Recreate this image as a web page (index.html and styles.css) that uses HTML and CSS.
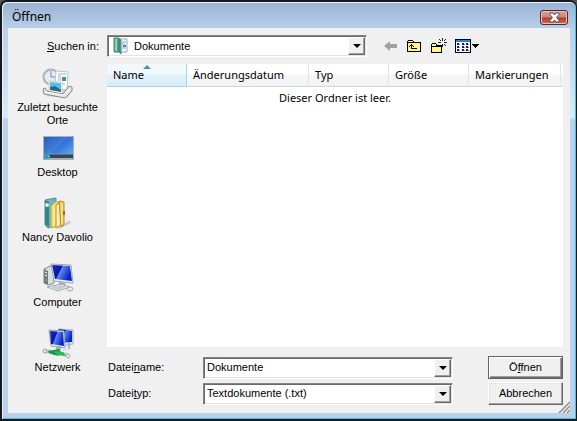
FILE: index.html
```html
<!DOCTYPE html>
<html lang="de">
<head>
<meta charset="utf-8">
<title>Öffnen</title>
<link rel="stylesheet" href="styles.css">
</head>
<body>
<main class="window">
  <header class="titlebar">
    <h1>Öffnen</h1>
    <button class="close" aria-label="Schließen">
      <svg width="13" height="11" viewBox="0 0 13 11"><path d="M2 1h3l1.500 2L8 1h3v1.500L8.500 5.500 11 8.500V10H8L6.500 8 5 10H2V8.500l2.500-3L2 2.500z" fill="#fff" stroke="#53566b"/></svg>
    </button>
  </header>
  <form class="client">
    <div class="toolbar">
      <label for="folder"><u>S</u>uchen in:</label>
      <div class="combo folder">
        <svg class="combo-icon" width="16" height="18" viewBox="0 0 16 18"><path d="M6 2h8v13H6z" fill="#f5f8fb" stroke="#9aabb8"/><path d="M9 5h4M9 7h3M9 11h4" stroke="#9aa9bb"/><path d="M10 8h3v2h-3z" fill="#3685dc"/><path d="M1 1h5l2 2v14l-2-2H1z" fill="#5aa790" stroke="#438775"/><path d="M2 2h2v12H2z" fill="#9acdbd"/><path d="M6 2v13" stroke="#2e6e68"/></svg>
        <select id="folder"><option>Dokumente</option></select>
        <span class="arrow"></span>
      </div>
      <div class="tools">
        <button type="button" aria-label="Zurück"><svg width="14" height="12" viewBox="0 0 14 12"><path d="M0 6l6-5v3h7v4H6v3z" fill="#a0a0a0"/></svg></button>
        <button type="button" aria-label="Übergeordneter Ordner"><svg width="16" height="14" viewBox="0 0 16 14" shape-rendering="crispEdges"><path d="M1 2h1V1h5v1h1v1h7v10H1z" fill="#000"/><path d="M2 2h5v1H2zM2 4h12v8H2z" fill="#fff685"/><path d="M5 5h1v1h1v1H6v2h5v1H5V7H4V6h1zM7 7h1v1H7zM3 7h1v1H3z" fill="#000"/></svg></button>
        <button type="button" aria-label="Neuer Ordner"><svg width="17" height="16" viewBox="0 0 17 16" shape-rendering="crispEdges"><path d="M1 6h1V5h4v1h1v1h5v8H1z" fill="#000"/><path d="M2 6h4v1H2zM2 9h9v5H2zM2 7h4v1H2z" fill="#fff685"/><path d="M12 0h1v3h-1zM12 6h1v3h-1zM8 4h3v1H8zM14 4h3v1h-3zM9 1h1v1H9zM10 2h1v1h-1zM15 1h1v1h-1zM14 2h1v1h-1zM14 6h1v1h-1zM15 7h1v1h-1z" fill="#222"/></svg></button>
        <button type="button" aria-label="Ansicht"><svg width="24" height="14" viewBox="0 0 24 14" shape-rendering="crispEdges"><path d="M0 0h16v14H0z"/><path d="M1 3h14v10H1z" fill="#fff"/><path d="M1 1h14v2H1z" fill="#1d83e8"/><path d="M2 4h2v2H2zM7 4h2v2H7zM11 4h2v2h-2zM2 7h2v2H2zM7 7h2v2H7zM11 7h2v2h-2zM2 10h2v2H2zM7 10h2v2H7zM11 10h2v2h-2z" fill="#161673"/><path d="M4 5h1v1H4zM9 5h1v1H9zM13 5h1v1h-1zM4 8h1v1H4zM9 8h1v1H9zM13 8h1v1h-1zM4 11h1v1H4zM9 11h1v1H9zM13 11h1v1h-1z" fill="#889"/><path d="M17 5h7v1h-1v1h-1v1h-1v1h-1V8h-1V7h-1V6h-1z"/></svg></button>
      </div>
    </div>

    <nav class="places">
      <a href="#zuletzt">
        <svg width="32" height="32" viewBox="0 0 32 32"><path d="M4 29l22 2 5-9-6-3z" fill="#d1d1d1"/><circle cx="9" cy="10" r="7.500" fill="#e5edf2" stroke="#a5b3bd" stroke-width="2"/><path d="M9 4v6h4" fill="none" stroke="#758593"/><path d="M14 4l12 1-1 18-12-2z" fill="#fff" stroke="#bec3c8"/><path d="M16 7h8M16 9h3M16 11h3M16 13h3M16 17h7" stroke="#a8aeb5"/><path d="M20 10h4v4h-4z" fill="#349a9b"/><path d="M7 14l13 1v12L7 25z" fill="#fff" stroke="#ccd2d6"/><path d="M8 15l11 1v8L8 23z" fill="#5fb9ea"/><path d="M8 20l5-1 6 4v2L8 23z" fill="#286e80"/><path d="M1 22l2-1 2 3 16 3 6-8 3 1v4l-7 7L2 27z" fill="#e5e5e2" stroke="#8c8d88"/><path d="M3 25l18 3 7-6" fill="none" stroke="#fff"/></svg>
        <span>Zuletzt besuchte Orte</span>
      </a>
      <a href="#desktop">
        <svg width="32" height="32" viewBox="0 0 32 32"><defs><linearGradient id="sky" x2="1" y2="1"><stop stop-color="#173fb0"/><stop offset=".55" stop-color="#367bdf"/><stop offset="1" stop-color="#71b3ef"/></linearGradient></defs><path d="M1 4h31v24H1z" fill="#a2afbd"/><path d="M2 5h29v21H2z" fill="url(#sky)"/><path d="M2 5h24L9 22H2z" fill="#71a9ee" opacity=".25"/><path d="M2 22h29v4H2z" fill="#334657"/><path d="M2 22h29" stroke="#8298ab"/><circle cx="5" cy="24" r="3" fill="#259bc4"/><path d="M4 23h1v1H4z" fill="#ef6c2d"/><path d="M6 24h1v1H6z" fill="#d8e845"/></svg>
        <span>Desktop</span>
      </a>
      <a href="#nancy">
        <svg width="32" height="32" viewBox="0 0 32 32"><path d="M14 31l14-8 1 3-12 6z" fill="#cdcdcd"/><path d="M3 3l11-2v27l-8 3-3-3z" fill="#6eb7b7" stroke="#489297"/><path d="M3 3l4 2v25l-4-3z" fill="#348588"/><circle cx="5" cy="8" r="2" fill="#dfeef0"/><path d="M9 9l4-4h6v23l-10 3z" fill="#f0d975" stroke="#c6a642"/><path d="M14 8l5-3v23l-5 3z" fill="#f8e89f" stroke="#ba9737"/><path d="M17 4l5 1v23l-3 2z" fill="#ecc957" stroke="#b28e2e"/><path d="M12 9v20M16 8v20M20 6v21" stroke="#fff5ba"/><path d="M21 14h2v4h-2z" fill="#be5248"/></svg>
        <span>Nancy Davolio</span>
      </a>
      <a href="#computer">
        <svg width="32" height="32" viewBox="0 0 32 32"><defs><linearGradient id="screen" x2="1" y2=".4"><stop stop-color="#1534b8"/><stop offset=".45" stop-color="#0612ae"/><stop offset=".5" stop-color="#5a86f4"/><stop offset="1" stop-color="#0923be"/></linearGradient></defs><path d="M2 7l6-3 4 2v15l-5 2-5-2z" fill="#d8dddd" stroke="#858d8d"/><path d="M2 7l4 2v14l-4-2z" fill="#737b7b"/><path d="M3 10l2 1M3 13l2 1" stroke="#fff"/><circle cx="4" cy="18" r="1" fill="#41cb67"/><path d="M9 2l20 1 2 18-19-2z" fill="#f0f3f6" stroke="#9ca6b3"/><path d="M10 3l18 1 2 15-17-2z" fill="url(#screen)"/><path d="M17 20l6 1 1 5h-7z" fill="#9ba6b0"/><path d="M5 25l14-3 9 3-12 4z" fill="#f0f1f2" stroke="#a7adb2"/><path d="M8 25l11-2 6 2-9 3z" fill="#c7cccf"/><ellipse cx="28" cy="27" rx="3" ry="2" fill="#eee" stroke="#aaa"/></svg>
        <span>Computer</span>
      </a>
      <a href="#netzwerk">
        <svg width="32" height="32" viewBox="0 0 32 32"><path d="M16 2l15 1v14l-12 2z" fill="#dfe6f2" stroke="#9facba"/><path d="M17 2l13 2v11l-11 1z" fill="url(#screen)"/><path d="M7 3l15 1 1 17-14-2z" fill="#e6ebf2" stroke="#94a2b3"/><path d="M8 4l13 1 1 14-13-2z" fill="url(#screen)"/><path d="M14 19h5v4h-5zM26 16h2v6h-2z" fill="#a5b0b8"/><path d="M20 22l10-1v1l-9 2z" fill="#dce0e3"/><path d="M3 24l6 1M20 27l6 1" stroke="#bccac3" stroke-width="4"/><path d="M6 24l11-2 2 3h-6l5 4-6-1-5-2z" fill="#139c42"/><path d="M12 24l9 1 3 4-8-1z" fill="#25bb5b"/><circle cx="3" cy="24" r="2" fill="#dfe5e2" stroke="#9ba7a1"/><circle cx="26" cy="29" r="2" fill="#e5e9e7" stroke="#a8b2ac"/></svg>
        <span>Netzwerk</span>
      </a>
    </nav>

    <section class="files">
      <table>
        <thead><tr>
          <th class="name sorted">Name</th><th class="date">Änderungsdatum</th><th class="kind">Typ</th><th class="size">Größe</th><th class="tags">Markierungen</th><th class="rest"></th>
        </tr></thead>
        <tbody><tr><td colspan="6">Dieser Ordner ist leer.</td></tr></tbody>
      </table>
    </section>

    <footer class="fields">
      <label for="file">Datei<u>n</u>ame:</label>
      <div class="combo"><input id="file" type="text" value="Dokumente"><button type="button" class="arrow" aria-label="Liste öffnen"></button></div>
      <button class="push default" type="submit">Ö<u>f</u>fnen</button>
      <label for="type">Datei<u>t</u>yp:</label>
      <div class="combo"><select id="type"><option>Textdokumente (.txt)</option></select><span class="arrow"></span></div>
      <button class="push" type="button">Abbrechen</button>
    </footer>
    <svg class="grip" width="12" height="12" viewBox="0 0 12 12"><path d="M1 12L12 1M5 12l7-7M9 12l3-3" stroke="#8e8e8e" stroke-width="1.500"/></svg>
  </form>
</main>
</body>
</html>
```
FILE: styles.css
```css
* { box-sizing: border-box; }
body {
  margin: 0;
  background: #555;
  color: #000;
  font: 11px/13px "Liberation Sans", Arial, sans-serif;
}
button, input, select { font: inherit; color: inherit; }
u { text-decoration: underline; text-underline-offset: 1px; }

.window {
  display: flex;
  flex-direction: column;
  min-height: 100vh;
  padding: 0 6px 6px;
  border: 2px solid #15181c;
  border-right-width: 1px;
  border-radius: 7px 7px 0 0;
  background: linear-gradient(#98b2d1 0, #b9d1ea 28px, #dce8f5 116px, #b9d1ea 117px);
  box-shadow: inset 1px 1px #e6f2fc, inset -1px -1px #35c5e5;
}
.titlebar {
  display: flex;
  align-items: center;
  justify-content: space-between;
  height: 26px;
  padding: 4px 2px 0 4px;
}
h1, table { font: 11px/16px "Noto Sans", "Open Sans", sans-serif; }
h1 { margin: 0; font-size: 12px; }
.close {
  display: grid;
  place-items: center;
  width: 28px;
  height: 15px;
  padding: 0;
  border: 1px solid #5b2430;
  border-radius: 3px;
  background: linear-gradient(#dda197, #c98478 48%, #b43c28 52%, #cb7059);
  box-shadow: inset 0 0 0 1px #ecc0b8;
}

.client {
  position: relative;
  flex: 1;
  display: grid;
  grid-template: 36px 1fr 66px / 99px 1fr;
  background: #f0f0f0;
  padding-right: 7px;
}
.toolbar {
  grid-column: 1 / -1;
  display: flex;
  align-items: center;
}
.toolbar label { width: 99px; padding-right: 8px; text-align: right; }
.combo {
  position: relative;
  display: flex;
  height: 22px;
  border: 1px solid;
  border-color: #848484 #fff #fff #848484;
  background: #fff;
  box-shadow: inset 1px 1px #696969, inset -1px -1px #e3e3e3;
}
.folder { width: 260px; }
.combo-icon { margin: 1px 2px 0 5px; }
.combo select, .combo input {
  flex: 1;
  min-width: 0;
  appearance: none;
  border: 0;
  outline: 0;
  padding: 0 18px 0 3px;
  background: transparent;
}
.combo .arrow {
  position: absolute;
  inset: 1px 1px 1px auto;
  display: grid;
  place-items: center;
  width: 17px;
  padding: 0;
  border: 1px solid;
  border-color: #fff #696969 #696969 #fff;
  background: #f0f0f0;
  box-shadow: inset -1px -1px #a0a0a0;
  pointer-events: none;
}
.arrow::after {
  content: "";
  border: 4px solid transparent;
  border-top-color: #000;
  border-bottom: 0;
}
.tools { display: flex; align-items: center; gap: 8px; margin-left: 17px; }
.tools button { display: flex; padding: 0; border: 0; background: none; }

.places {
  grid-row: 2 / 4;
  display: grid;
  grid-auto-rows: 65px;
  align-content: start;
  padding-top: 3px;
}
.places a {
  display: flex;
  flex-direction: column;
  align-items: center;
  gap: 2px;
  padding: 0 8px;
  color: inherit;
  text-align: center;
  text-decoration: none;
}
.places svg { flex: none; }

.files { background: #fff; }
table { width: 100%; table-layout: fixed; border-collapse: separate; border-spacing: 0; }
th {
  height: 23px;
  padding: 0 0 0 6px;
  border-right: 1px solid #e2e3e5;
  border-bottom: 1px solid #d5d5d5;
  background: linear-gradient(#fff 45%, #f5f6f8 50%, #f1f2f4);
  font-weight: 400;
  text-align: left;
  white-space: nowrap;
}
td { height: 22px; padding: 0; text-align: center; }
.name, .kind, .size { width: 80px; }
.date { width: 122px; }
.tags { width: 92px; }
.rest { border-right: 0; padding: 0; }
.sorted {
  position: relative;
  border-color: #96d9f9;
  background: linear-gradient(#f2f9fc 45%, #e1f1f9 50%, #d8ecf6);
}
.sorted::before {
  content: "";
  position: absolute;
  top: 1px;
  left: calc(50% - 4px);
  border: 4px solid transparent;
  border-bottom-color: #558aa5;
  border-top: 0;
}

.fields {
  display: grid;
  grid-template-columns: 95px 1fr 75px;
  row-gap: 3px;
  align-content: start;
  align-items: center;
  padding: 9px 0 0 1px;
}
.fields .combo { margin-right: 35px; }
.push {
  height: 23px;
  padding: 0;
  border: 1px solid;
  border-color: #fff #696969 #696969 #fff;
  background: #f0f0f0;
  box-shadow: inset -1px -1px #a0a0a0, inset 1px 1px #e3e3e3;
}
.default {
  border-color: #646464;
  box-shadow: inset 1px 1px #fff, inset -1px -1px #696969, inset -2px -2px #a0a0a0;
}
.grip { position: absolute; right: 0; bottom: 0; }
```
